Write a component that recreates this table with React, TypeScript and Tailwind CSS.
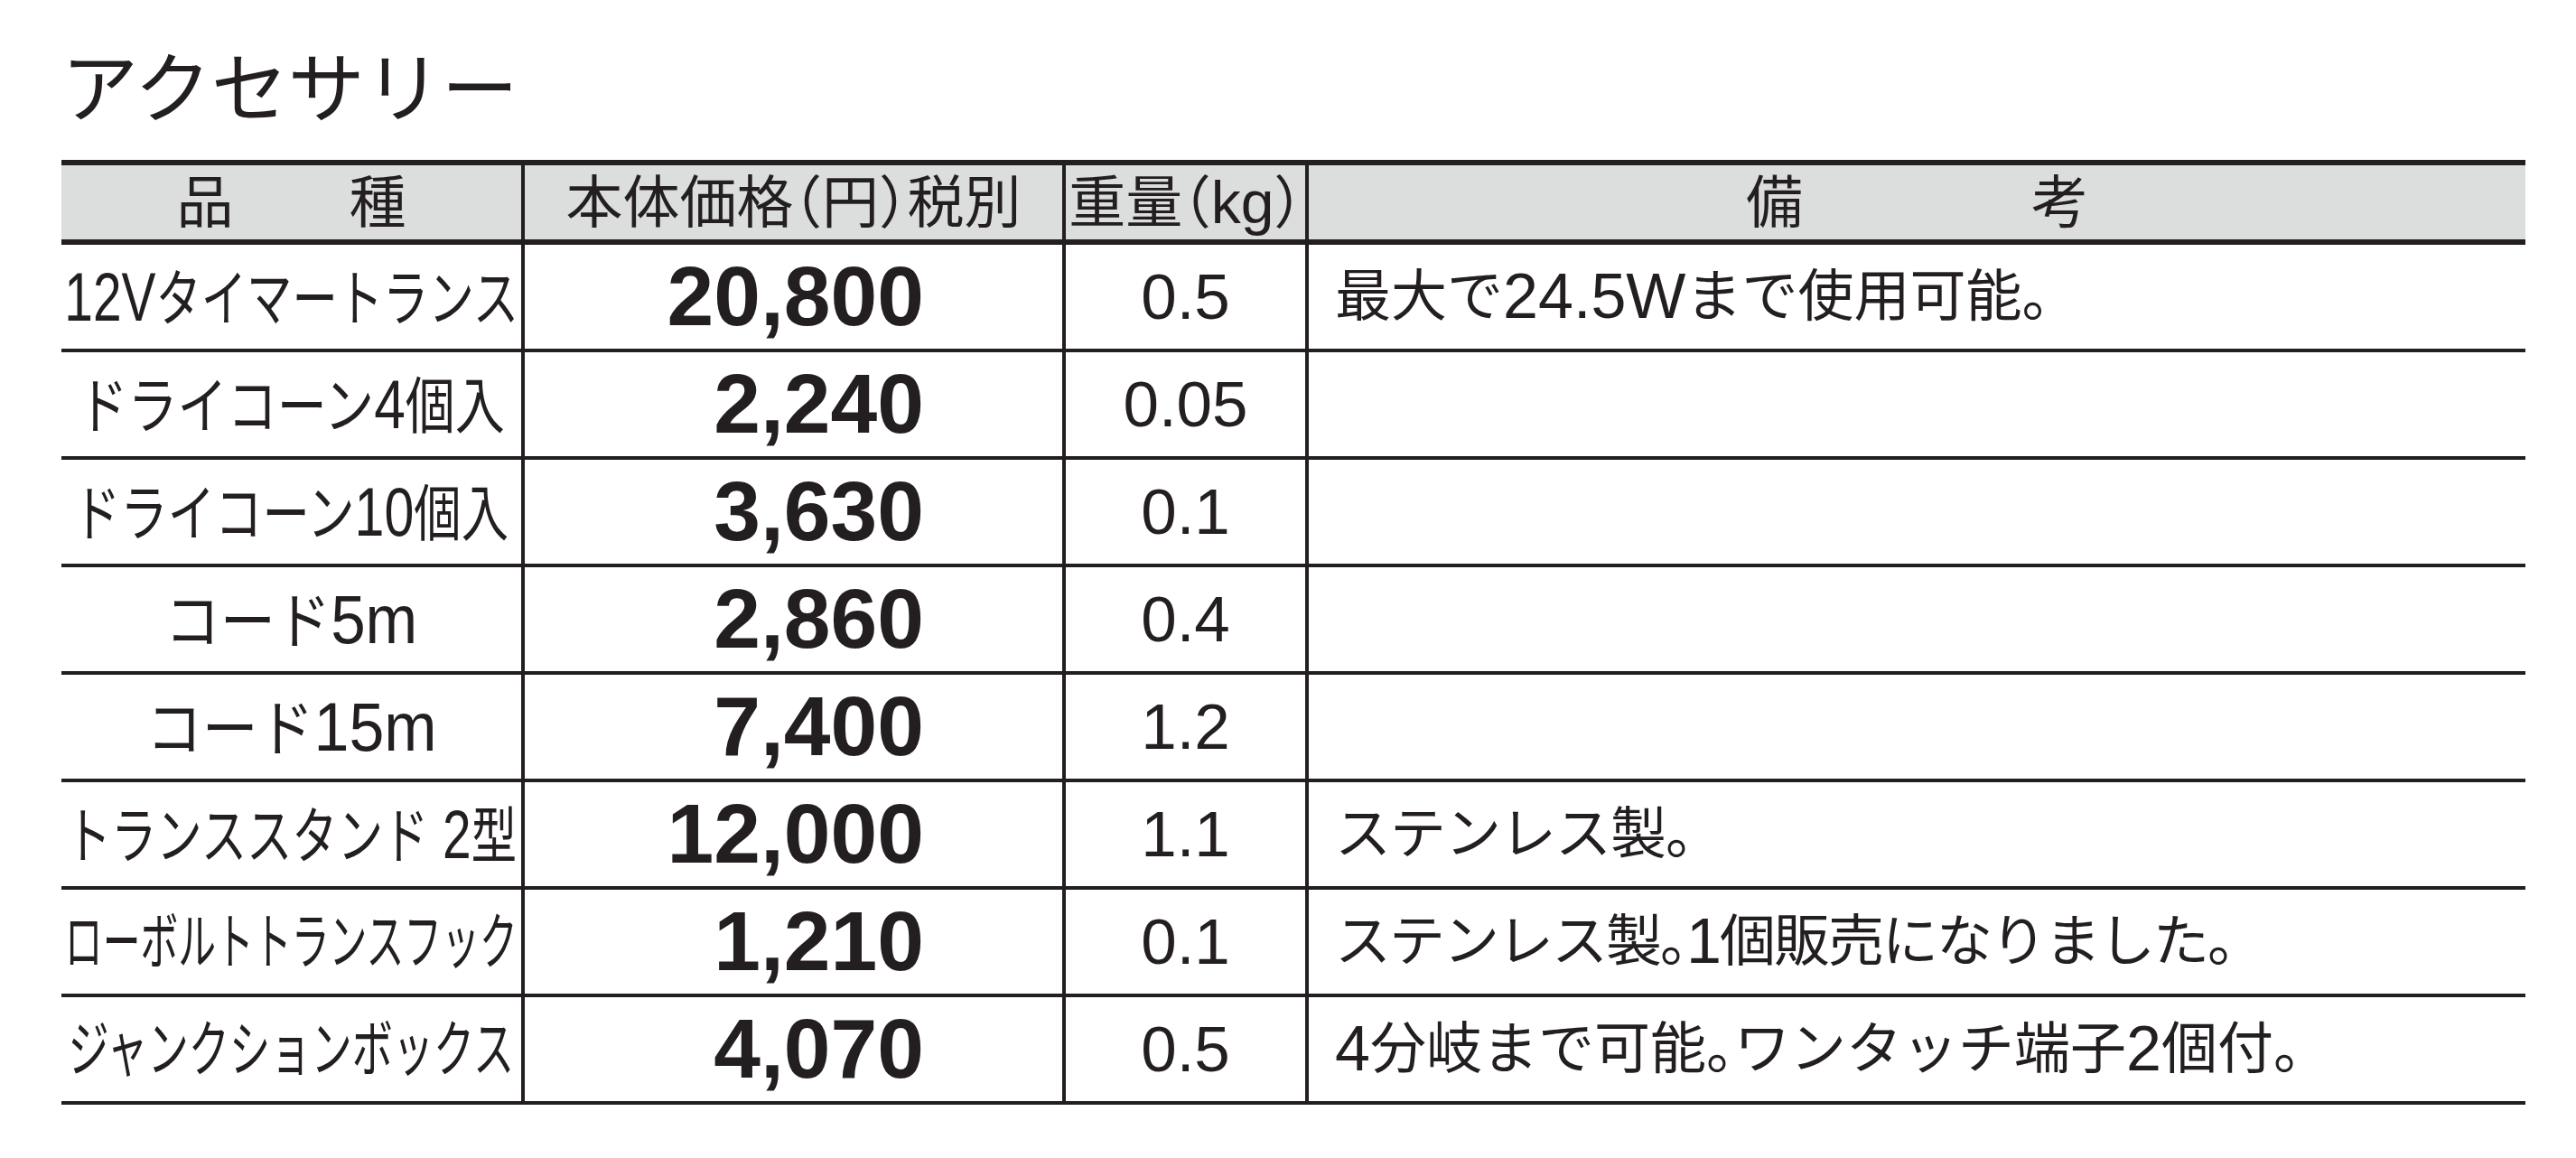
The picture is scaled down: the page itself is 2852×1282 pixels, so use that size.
const items = [
  { name: "12Vタイマートランス", fit: "scale-x-[0.74]", price: "20,800", weight: "0.5", note: "最大で24.5Wまで使用可能。", noteFit: "" },
  { name: "ドライコーン4個入", fit: "scale-x-[0.81]", price: "2,240", weight: "0.05", note: "", noteFit: "" },
  { name: "ドライコーン10個入", fit: "scale-x-[0.77]", price: "3,630", weight: "0.1", note: "", noteFit: "" },
  { name: "コード5m", fit: "scale-x-[0.9]", price: "2,860", weight: "0.4", note: "", noteFit: "" },
  { name: "コード15m", fit: "scale-x-[0.91]", price: "7,400", weight: "1.2", note: "", noteFit: "" },
  { name: "トランススタンド 2型", fit: "scale-x-[0.74]", price: "12,000", weight: "1.1", note: "ステンレス製。", noteFit: "tracking-[-1px]" },
  { name: "ローボルトトランスフック", fit: "scale-x-[0.615]", price: "1,210", weight: "0.1", note: "ステンレス製。1個販売になりました。", noteFit: "tracking-[-2px]" },
  { name: "ジャンクションボックス", fit: "scale-x-[0.665]", price: "4,070", weight: "0.5", note: "4分岐まで可能。ワンタッチ端子2個付。", noteFit: "" },
];

// latin runs are set a bit larger than the kana/kanji around them
const Mixed = ({ text }: { text: string }) => (
  <>
    {text
      .split(/([\x20-\x7e]+)/)
      .filter(Boolean)
      .map((part, i) =>
        /^[\x20-\x7e]+$/.test(part) ? (
          <span key={i} className="text-[1.13em]">
            {part}
          </span>
        ) : (
          <span key={i}>{part}</span>
        )
      )}
  </>
);

const App = () => {
  return (
    <div className="min-h-screen bg-white text-[#231f20] font-['Liberation_Sans','Noto_Sans_CJK_JP',sans-serif]">
      <div className="ml-[68px] w-[2728px] pt-[57px]">
        <h1 className="text-[85px] leading-none font-normal">アクセサリー</h1>

        <div className="mt-[35px] border-t-[6px] border-[#231f20]">
          <div className="flex h-[88px] bg-[#dcdddd] border-b-[6px] border-[#231f20] text-[63px] leading-none">
            <div className="w-[509px] shrink-0 flex items-center justify-center gap-[128px]">
              <span>品</span>
              <span>種</span>
            </div>
            <div className="w-[599px] shrink-0 border-l-4 border-[#231f20] flex items-center justify-center [font-feature-settings:'halt']">
              本体価格（円）税別
            </div>
            <div className="w-[269px] shrink-0 border-l-4 border-[#231f20] flex items-center justify-center [font-feature-settings:'halt']">
              重量（<span className="text-[66px]">kg</span>）
            </div>
            <div className="w-[1351px] shrink-0 border-l-4 border-[#231f20] flex items-center justify-center gap-[253px]">
              <span>備</span>
              <span>考</span>
            </div>
          </div>

          {items.map((item) => (
            <div key={item.name} className="flex h-[119px] border-b-4 border-[#231f20] leading-none">
              <div className="w-[509px] shrink-0 flex items-center justify-center text-[68px]">
                <span className={`inline-block whitespace-nowrap ${item.fit}`}>
                  <Mixed text={item.name} />
                </span>
              </div>
              <div className="w-[599px] shrink-0 border-l-4 border-[#231f20] flex items-center justify-end pr-[153px] text-[93px] font-bold">
                {item.price}
              </div>
              <div className="w-[269px] shrink-0 border-l-4 border-[#231f20] flex items-center justify-center text-[71px]">
                {item.weight}
              </div>
              <div
                className={`w-[1351px] shrink-0 border-l-4 border-[#231f20] flex items-center pl-[29px] text-[62px] whitespace-nowrap [font-feature-settings:'halt'] ${item.noteFit}`}
              >
                <Mixed text={item.note} />
              </div>
            </div>
          ))}
        </div>
      </div>
    </div>
  );
};

export default App;
